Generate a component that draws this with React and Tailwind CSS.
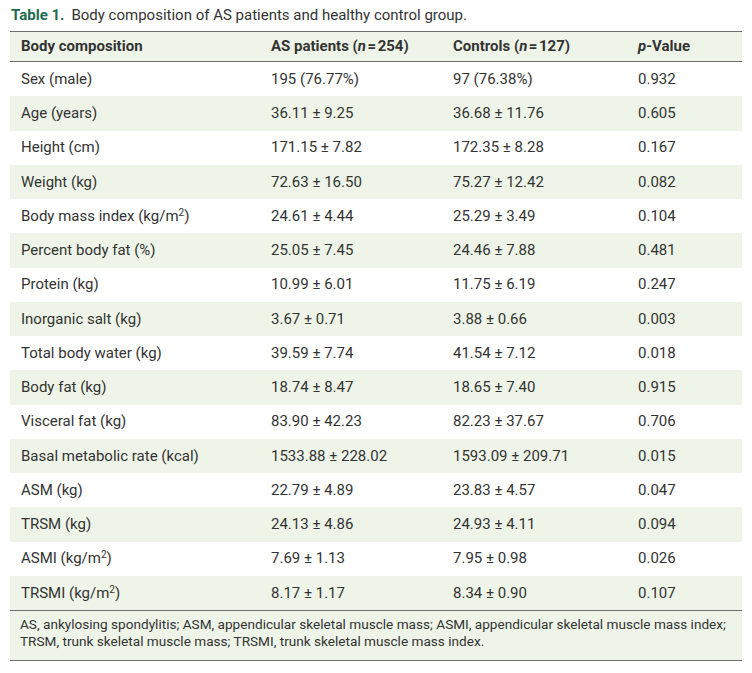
import React from 'react';

const Sup = () => <sup className="text-[10px] leading-none">2</sup>;

const rows = [
  ['Sex (male)', '195 (76.77%)', '97 (76.38%)', '0.932'],
  ['Age (years)', '36.11 ± 9.25', '36.68 ± 11.76', '0.605'],
  ['Height (cm)', '171.15 ± 7.82', '172.35 ± 8.28', '0.167'],
  ['Weight (kg)', '72.63 ± 16.50', '75.27 ± 12.42', '0.082'],
  [<>Body mass index (kg/m<Sup />)</>, '24.61 ± 4.44', '25.29 ± 3.49', '0.104'],
  ['Percent body fat (%)', '25.05 ± 7.45', '24.46 ± 7.88', '0.481'],
  ['Protein (kg)', '10.99 ± 6.01', '11.75 ± 6.19', '0.247'],
  ['Inorganic salt (kg)', '3.67 ± 0.71', '3.88 ± 0.66', '0.003'],
  ['Total body water (kg)', '39.59 ± 7.74', '41.54 ± 7.12', '0.018'],
  ['Body fat (kg)', '18.74 ± 8.47', '18.65 ± 7.40', '0.915'],
  ['Visceral fat (kg)', '83.90 ± 42.23', '82.23 ± 37.67', '0.706'],
  ['Basal metabolic rate (kcal)', '1533.88 ± 228.02', '1593.09 ± 209.71', '0.015'],
  ['ASM (kg)', '22.79 ± 4.89', '23.83 ± 4.57', '0.047'],
  ['TRSM (kg)', '24.13 ± 4.86', '24.93 ± 4.11', '0.094'],
  [<>ASMI (kg/m<Sup />)</>, '7.69 ± 1.13', '7.95 ± 0.98', '0.026'],
  [<>TRSMI (kg/m<Sup />)</>, '8.17 ± 1.17', '8.34 ± 0.90', '0.107'],
];

const App = () => {
  return (
    <div className="w-[752px] h-[673px] bg-white px-[10px] pt-[5px] text-[#333] font-['Roboto',sans-serif] text-[15px]">
      <div className="h-[26px] leading-[20px] pl-[1px]">
        <span className="font-bold text-[#1e6b4d]">Table 1.</span>
        <span className="ml-[7px]">Body composition of AS patients and healthy control group.</span>
      </div>

      <div className="w-[732px]">
        {/* Header */}
        <div className="flex items-center h-[31px] bg-[#eef5e8] border-t-[1.5px] border-b-[1.5px] border-[#6f6f6f] font-bold">
          <div className="w-[261px] pl-[11px]">Body composition</div>
          <div className="w-[182px]">AS patients (<i>n</i>&#8202;=&#8202;254)</div>
          <div className="w-[185px]">Controls (<i>n</i>&#8202;=&#8202;127)</div>
          <div className="flex-1"><i>p</i>-Value</div>
        </div>

        {/* Body */}
        {rows.map((r, i) => (
          <div
            key={i}
            className={`flex items-center h-[34.25px] ${i % 2 === 1 ? 'bg-[#eef5e8]' : 'bg-white'}`}
          >
            <div className="w-[261px] pl-[11px]">{r[0]}</div>
            <div className="w-[182px]">{r[1]}</div>
            <div className="w-[185px]">{r[2]}</div>
            <div className="flex-1">{r[3]}</div>
          </div>
        ))}

        {/* Footnote */}
        <div className="h-[51px] bg-[#eef5e8] border-t-[1.5px] border-b-[1.5px] border-[#6f6f6f] pl-[10px] pt-[5px] text-[13.6px] leading-[17px]">
          AS, ankylosing spondylitis; ASM, appendicular skeletal muscle mass; ASMI, appendicular skeletal muscle mass index;
          <br />
          TRSM, trunk skeletal muscle mass; TRSMI, trunk skeletal muscle mass index.
        </div>
      </div>
    </div>
  );
};

export default App;
